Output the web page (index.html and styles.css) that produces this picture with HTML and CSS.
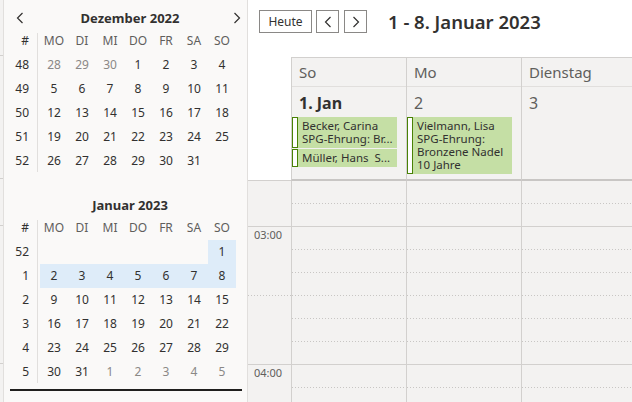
FILE: index.html
```html
<!DOCTYPE html>
<html lang="de">

<head>
    <meta charset="UTF-8">
    <title>Kalender – Woche</title>
    <link rel="stylesheet" href="styles.css">
</head>

<body>
    <div class="edge"></div>

    <aside class="sidebar">
        <section class="month">
            <div class="month-head">
                <span class="chev"><svg width="8" height="12" viewBox="0 0 8 12"><polyline points="6.5,1 1.5,6 6.5,11" /></svg></span>
                <span class="month-title">Dezember 2022</span>
                <span class="chev"><svg width="8" height="12" viewBox="0 0 8 12"><polyline points="1.5,1 6.5,6 1.5,11" /></svg></span>
            </div>
            <div class="cal">
                <div class="wk">#</div>
                <div class="dn">MO</div><div class="dn">DI</div><div class="dn">MI</div><div class="dn">DO</div><div class="dn">FR</div><div class="dn">SA</div><div class="dn">SO</div>

                <div class="wk">48</div>
                <div class="d other">28</div><div class="d other">29</div><div class="d other">30</div><div class="d">1</div><div class="d">2</div><div class="d">3</div><div class="d">4</div>

                <div class="wk">49</div>
                <div class="d">5</div><div class="d">6</div><div class="d">7</div><div class="d">8</div><div class="d">9</div><div class="d">10</div><div class="d">11</div>

                <div class="wk">50</div>
                <div class="d">12</div><div class="d">13</div><div class="d">14</div><div class="d">15</div><div class="d">16</div><div class="d">17</div><div class="d">18</div>

                <div class="wk">51</div>
                <div class="d">19</div><div class="d">20</div><div class="d">21</div><div class="d">22</div><div class="d">23</div><div class="d">24</div><div class="d">25</div>

                <div class="wk">52</div>
                <div class="d">26</div><div class="d">27</div><div class="d">28</div><div class="d">29</div><div class="d">30</div><div class="d">31</div><div class="d"></div>
            </div>
        </section>

        <section class="month second">
            <div class="month-head">
                <span class="chev"></span>
                <span class="month-title">Januar 2023</span>
                <span class="chev"></span>
            </div>
            <div class="cal">
                <div class="wk">#</div>
                <div class="dn">MO</div><div class="dn">DI</div><div class="dn">MI</div><div class="dn">DO</div><div class="dn">FR</div><div class="dn">SA</div><div class="dn">SO</div>

                <div class="wk">52</div>
                <div class="d"></div><div class="d"></div><div class="d"></div><div class="d"></div><div class="d"></div><div class="d"></div><div class="d sel">1</div>

                <div class="wk">1</div>
                <div class="d sel">2</div><div class="d sel">3</div><div class="d sel">4</div><div class="d sel">5</div><div class="d sel">6</div><div class="d sel">7</div><div class="d sel">8</div>

                <div class="wk">2</div>
                <div class="d">9</div><div class="d">10</div><div class="d">11</div><div class="d">12</div><div class="d">13</div><div class="d">14</div><div class="d">15</div>

                <div class="wk">3</div>
                <div class="d">16</div><div class="d">17</div><div class="d">18</div><div class="d">19</div><div class="d">20</div><div class="d">21</div><div class="d">22</div>

                <div class="wk">4</div>
                <div class="d">23</div><div class="d">24</div><div class="d">25</div><div class="d">26</div><div class="d">27</div><div class="d">28</div><div class="d">29</div>

                <div class="wk">5</div>
                <div class="d">30</div><div class="d">31</div><div class="d other">1</div><div class="d other">2</div><div class="d other">3</div><div class="d other">4</div><div class="d other">5</div>
            </div>
        </section>

        <div class="rule"></div>
    </aside>

    <main class="main">
        <div class="toolbar">
            <button class="btn btn-today">Heute</button>
            <button class="btn btn-nav"><svg width="8" height="12" viewBox="0 0 8 12"><polyline points="6.5,1 1.5,6 6.5,11" /></svg></button>
            <button class="btn btn-nav next"><svg width="8" height="12" viewBox="0 0 8 12"><polyline points="1.5,1 6.5,6 1.5,11" /></svg></button>
            <h1 class="range">1 - 8. Januar 2023</h1>
        </div>

        <div class="days">
            <div class="corner"></div>

            <div class="day">
                <div class="day-name">So</div>
                <div class="day-body">
                    <div class="date today">1. Jan</div>
                    <div class="ev">
                        <span class="ev-bar"></span>
                        <span class="ev-text">Becker, Carina<br>SPG-Ehrung: Br...</span>
                    </div>
                    <div class="ev">
                        <span class="ev-bar"></span>
                        <span class="ev-text">Müller, Hans&nbsp; S...</span>
                    </div>
                </div>
            </div>

            <div class="day">
                <div class="day-name">Mo</div>
                <div class="day-body">
                    <div class="date">2</div>
                    <div class="ev">
                        <span class="ev-bar"></span>
                        <span class="ev-text">Vielmann, Lisa<br>SPG-Ehrung:<br>Bronzene Nadel<br>10 Jahre</span>
                    </div>
                </div>
            </div>

            <div class="day">
                <div class="day-name">Dienstag</div>
                <div class="day-body">
                    <div class="date">3</div>
                </div>
            </div>
        </div>

        <div class="grid">
            <div class="gutter">
                <div class="gs"></div>
                <div class="gs hour"></div>
                <div class="gs"><span class="time">03:00</span></div>
                <div class="gs"></div>
                <div class="gs half"></div>
                <div class="gs"></div>
                <div class="gs"></div>
                <div class="gs hour"></div>
                <div class="gs"><span class="time">04:00</span></div>
                <div class="gs"></div>
            </div>

            <div class="col">
                <div class="slot"></div><div class="slot hour"></div><div class="slot"></div><div class="slot"></div><div class="slot"></div>
                <div class="slot"></div><div class="slot"></div><div class="slot hour"></div><div class="slot"></div><div class="slot"></div>
            </div>
            <div class="col">
                <div class="slot"></div><div class="slot hour"></div><div class="slot"></div><div class="slot"></div><div class="slot"></div>
                <div class="slot"></div><div class="slot"></div><div class="slot hour"></div><div class="slot"></div><div class="slot"></div>
            </div>
            <div class="col">
                <div class="slot"></div><div class="slot hour"></div><div class="slot"></div><div class="slot"></div><div class="slot"></div>
                <div class="slot"></div><div class="slot"></div><div class="slot hour"></div><div class="slot"></div><div class="slot"></div>
            </div>
        </div>
    </main>
</body>

</html>
```

FILE: styles.css
```css
body {
    margin: 0;
    display: flex;
    height: 402px;
    overflow: hidden;
    background-color: #fff;
    color: #323130;
    font-family: "Noto Sans", sans-serif;
}

/* schmaler Rest der Ansicht links */
.edge {
    flex: 0 0 3px;
    background-color: #f3f2f1;
    background-image:
        linear-gradient(#d2d0ce, #d2d0ce),
        linear-gradient(#d2d0ce, #d2d0ce),
        linear-gradient(#d2d0ce, #d2d0ce),
        linear-gradient(#d2d0ce, #d2d0ce);
    background-size: 100% 1px;
    background-repeat: no-repeat;
    background-position: 0 55px, 0 178px, 0 225px, 0 363px;
}

.sidebar {
    flex: 0 0 243px;
    border-left: 1px solid #e1dfdd;
    border-right: 1px solid #e1dfdd;
    background-color: #faf9f8;
    padding-top: 7px;
}

.month-head {
    display: flex;
    align-items: center;
    height: 22px;
    padding: 0 2px 0 8px;
}

.chev {
    flex: 0 0 16px;
    display: flex;
    justify-content: center;
}

svg polyline {
    fill: none;
    stroke: #323130;
    stroke-width: 1.2;
}

.month-title {
    flex: 1;
    text-align: center;
    padding-left: 3px;
    font-size: 13px;
    font-weight: 700;
}

.cal {
    display: grid;
    grid-template-columns: 36px repeat(7, 28px);
    grid-auto-rows: 24px;
    line-height: 24px;
    font-size: 12px;
    /* Trennlinie hinter den Kalenderwochen */
    background: linear-gradient(#e1dfdd, #e1dfdd) 33px 4px / 1px calc(100% - 5px) no-repeat;
}

.wk {
    text-align: right;
    padding-right: 11px;
}

.d,
.dn {
    text-align: center;
}

.dn {
    color: #605e5c;
}

.other {
    color: #8a8886;
}

.sel {
    background-color: #deecf9;
}

.second {
    margin-top: 21px;
}

.rule {
    height: 2px;
    margin: 5px 5px 0 6px;
    background-color: #201f1e;
}

/* Hauptbereich */
.main {
    flex: 1;
    min-width: 0;
    display: flex;
    flex-direction: column;
    overflow: hidden;
}

.toolbar {
    flex: 0 0 57px;
    box-sizing: border-box;
    display: flex;
    align-items: flex-start;
    padding: 10px 0 0 11px;
}

.btn {
    height: 23px;
    box-sizing: border-box;
    display: flex;
    align-items: center;
    justify-content: center;
    padding: 0;
    border: 1px solid #8a8886;
    background-color: #fff;
    color: #323130;
    font-family: inherit;
    font-size: 12px;
}

.btn-today {
    width: 53px;
}

.btn-nav {
    width: 23px;
    margin-left: 4px;
}

.btn-nav.next {
    margin-left: 5px;
}

.range {
    margin: 0 0 0 21px;
    font-size: 18.5px;
    font-weight: 600;
    line-height: 23px;
    white-space: nowrap;
}

.days {
    display: flex;
    flex: 0 0 124px;
}

.corner {
    flex: 0 0 43px;
    border-bottom: 1px solid #d2d0ce;
    box-sizing: border-box;
    height: 124px;
}

.day {
    flex: 0 0 114px;
    border-left: 1px solid #d2d0ce;
    border-top: 1px solid #d2d0ce;
    border-bottom: 2px solid #c8c6c4;
    background-color: #f3f2f1;
}

.day-name {
    height: 28px;
    line-height: 28px;
    padding-left: 7px;
    border-bottom: 1px solid #e1dfdd;
    font-size: 15px;
    color: #605e5c;
}

.day-body {
    padding-top: 6px;
}

.date {
    height: 20px;
    line-height: 20px;
    padding-left: 7px;
    margin-bottom: 4px;
    font-size: 16px;
    color: #605e5c;
}

.date.today {
    font-weight: 700;
    color: #323130;
}

.ev {
    display: flex;
    width: 105px;
    margin-bottom: 1px;
    background-color: #c5dfa5;
}

.ev-bar {
    flex: 0 0 4px;
    border: 1px solid #498205;
    background-color: #fff;
}

.ev-text {
    padding: 2px 0 3px 4px;
    font-size: 11.5px;
    line-height: 13px;
    white-space: nowrap;
    overflow: hidden;
}

/* Zeitraster */
.grid {
    display: flex;
    flex: 1;
}

.gutter {
    flex: 0 0 43px;
    background-color: #f3f2f1;
}

.gs,
.slot {
    height: 23px;
    box-sizing: border-box;
}

.gs.hour,
.slot.hour {
    border-bottom: 1px solid #d2d0ce;
}

.gs.half,
.slot:not(.hour) {
    background: linear-gradient(to right, #c8c6c4 1px, transparent 1px) left bottom / 3px 1px repeat-x;
}

.time {
    display: block;
    padding-left: 6px;
    line-height: 16px;
    font-size: 11px;
    color: #605e5c;
}

.col {
    flex: 0 0 114px;
    border-left: 1px solid #d2d0ce;
    background-color: #f3f2f1;
}
```
